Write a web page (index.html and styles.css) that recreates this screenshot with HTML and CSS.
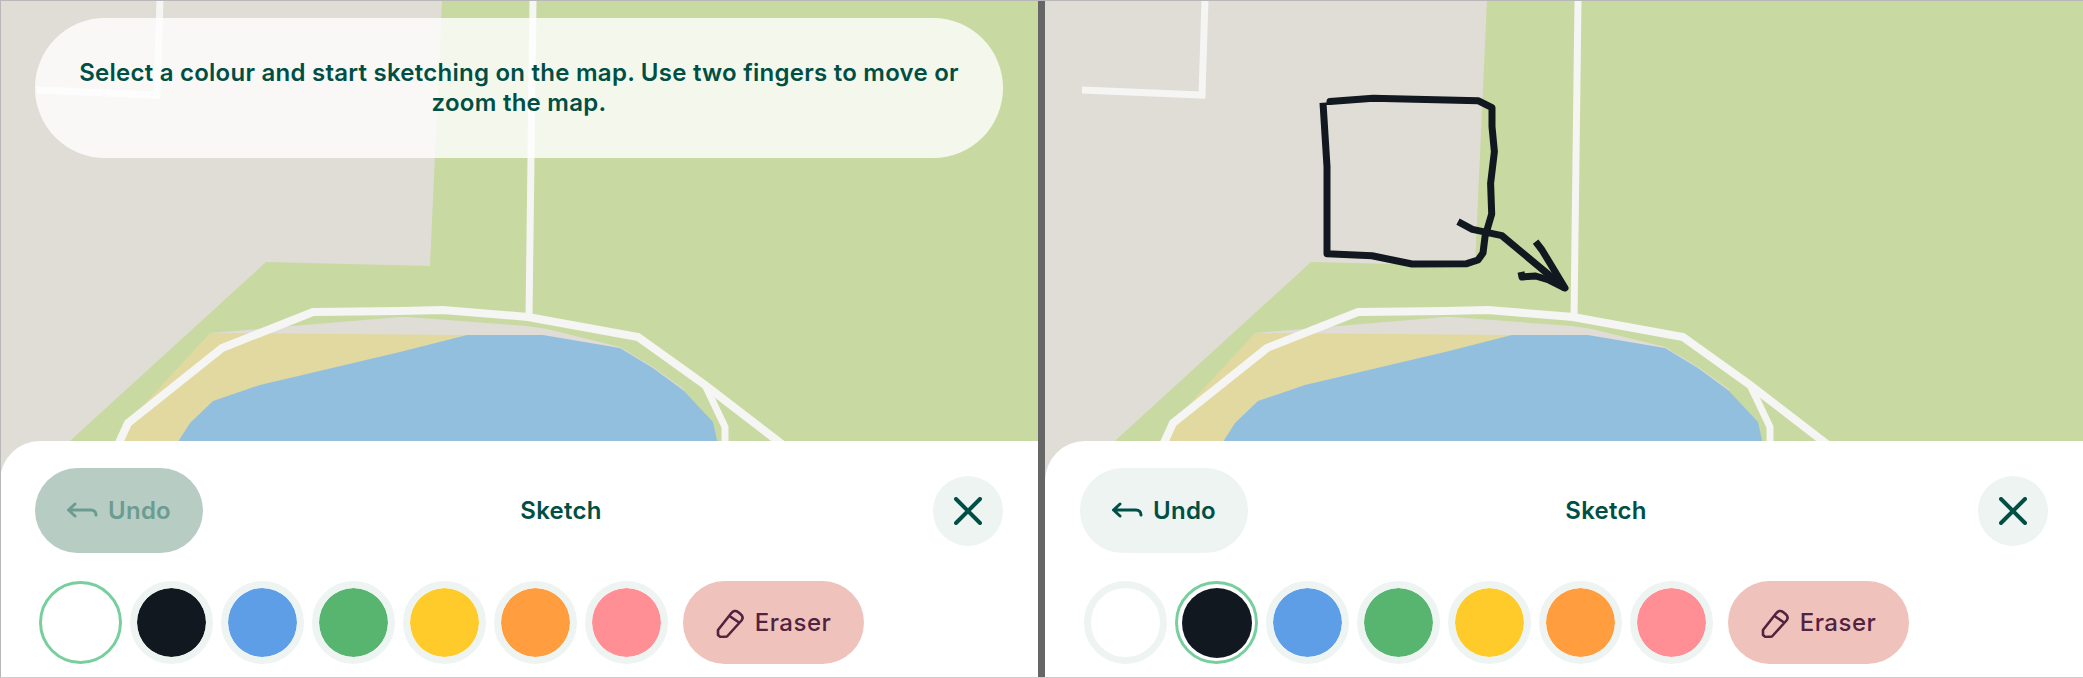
FILE: index.html
```html
<!DOCTYPE html>
<html lang="en">
<head>
    <meta charset="UTF-8">
    <meta name="viewport" content="width=device-width, initial-scale=1.0">
    <title>Sketch</title>
    <link rel="stylesheet" href="styles.css">
</head>
<body>
    <svg class="defs" width="0" height="0">
        <defs>
            <g id="map">
                <rect width="1038" height="678" fill="#e0ddd6"/>
                <polygon fill="#c8d9a1" points="442,0 1038,0 1038,678 40,678 60,450 266,262 430,266"/>
                <polygon fill="#e0ddd6" points="210,333 400,317 407,317 527,326 547,329 620,347 653,367 685,390 600,420 210,420"/>
                <polygon fill="#e1d99f" points="210,333 470,335 300,400 178,450 118,450 125,425"/>
                <polygon fill="#93bfdf" points="176,445 190,423 213,401 260,385 400,352 467,335 543,335 620,348 653,368 683,390 713,422 718,445"/>
                <g fill="none" stroke="#f5f5f4" stroke-width="7">
                    <polyline points="160,0 157,95 37,90"/>
                    <polyline points="533,0 529,317"/>
                    <polyline stroke-width="8" points="118,445 128,423 222,348 313,312 400,311 443,310 528,317 638,337 705,385 783,445"/>
                    <polyline points="705,385 725,427 725,445"/>
                </g>
            </g>
        </defs>
    </svg>

    <main class="frame">
        <section class="panel">
            <svg class="map" viewBox="0 0 1038 678"><use href="#map"/></svg>
            <div class="toast">Select a colour and start sketching on the map. Use two fingers to move or zoom the map.</div>
            <div class="sheet">
                <div class="sheet-head">
                    <button class="undo undo-disabled">
                        <svg class="undo-icon" viewBox="0 0 32 18"><path d="M8 2 1.500 8 8 14M2 8h22c3 0 5 2 5 5"/></svg>
                        Undo
                    </button>
                    <span class="title">Sketch</span>
                    <button class="close">
                        <svg viewBox="0 0 28 28"><path d="M2 2 26 26M26 2 2 26"/></svg>
                    </button>
                </div>
                <div class="colours">
                    <button class="swatch swatch-white selected"></button>
                    <button class="swatch swatch-black"></button>
                    <button class="swatch swatch-blue"></button>
                    <button class="swatch swatch-green"></button>
                    <button class="swatch swatch-yellow"></button>
                    <button class="swatch swatch-orange"></button>
                    <button class="swatch swatch-pink"></button>
                    <button class="eraser">
                        <svg class="eraser-icon" viewBox="0 0 28 30"><path d="M2 22 15 5.500c2-2.500 4.500-3.500 7-1.500l2.500 2c2.500 2 2.500 4.500 1 6.500L11 28.500 4.500 29 2 27ZM13.500 8l9.500 6.500"/></svg>
                        Eraser
                    </button>
                </div>
            </div>
        </section>

        <div class="divider"></div>

        <section class="panel">
            <svg class="map" viewBox="0 0 1038 678">
                <use href="#map"/>
                <g class="drawing">
                    <polyline points="285,105 285,101.500 328,98.300 433,100.700 447,107.700 447,126.700 449.400,151.700 445.600,183.300 446.700,214 440,236.700 438,253 433,260 421.700,263.700 367,264 327,255.700 282,253.700 282,166.700 278,102.700"/>
                    <polyline points="413,221.700 427.400,229.300 457,235.700 520,288.300"/>
                    <polyline points="490.600,241.700 497,250 520,288 504,280 490.600,276 477,277 476,272"/>
                </g>
            </svg>
            <div class="sheet sheet-only">
                <div class="sheet-head">
                    <button class="undo">
                        <svg class="undo-icon" viewBox="0 0 32 18"><path d="M8 2 1.500 8 8 14M2 8h22c3 0 5 2 5 5"/></svg>
                        Undo
                    </button>
                    <span class="title">Sketch</span>
                    <button class="close">
                        <svg viewBox="0 0 28 28"><path d="M2 2 26 26M26 2 2 26"/></svg>
                    </button>
                </div>
                <div class="colours">
                    <button class="swatch swatch-white"></button>
                    <button class="swatch swatch-black selected"></button>
                    <button class="swatch swatch-blue"></button>
                    <button class="swatch swatch-green"></button>
                    <button class="swatch swatch-yellow"></button>
                    <button class="swatch swatch-orange"></button>
                    <button class="swatch swatch-pink"></button>
                    <button class="eraser">
                        <svg class="eraser-icon" viewBox="0 0 28 30"><path d="M2 22 15 5.500c2-2.500 4.500-3.500 7-1.500l2.500 2c2.500 2 2.500 4.500 1 6.500L11 28.500 4.500 29 2 27ZM13.500 8l9.500 6.500"/></svg>
                        Eraser
                    </button>
                </div>
            </div>
        </section>
    </main>
</body>
</html>
```

FILE: styles.css
```css
* {
    box-sizing: border-box;
}
html, body {
    margin: 0;
    height: 100%;
}
body {
    font-family: Inter, "Liberation Sans", sans-serif;
    color: #004f45;
    overflow: hidden;
}
button {
    font: inherit;
    letter-spacing: inherit;
    border: none;
    padding: 0;
    cursor: pointer;
}
.defs {
    display: block;
}
.frame {
    position: relative;
    display: flex;
    height: 678px;
    font-size: 24px;
    font-weight: 600;
    letter-spacing: 0.25px;
}
.frame::after {
    content: "";
    position: absolute;
    inset: 0;
    border: 1px solid #b8b8b8;
    border-right: none;
    border-bottom-color: #ccc;
    pointer-events: none;
}
.divider {
    width: 7px;
    background-color: #666;
}
.panel {
    position: relative;
    display: flex;
    flex-direction: column;
    justify-content: space-between;
    width: 1038px;
    overflow: hidden;
}
.map {
    position: absolute;
    top: 0;
    left: 0;
    width: 1038px;
    height: 678px;
}
.drawing polyline {
    fill: none;
    stroke: #111820;
    stroke-width: 7;
    stroke-linejoin: round;
}

/* hint over the map */
.toast {
    position: relative;
    margin: 18px 35px 0;
    padding: 0 42px;
    height: 140px;
    display: flex;
    align-items: center;
    text-align: center;
    border-radius: 70px;
    background-color: rgba(255, 255, 255, 0.8);
    line-height: 30px;
}

/* bottom sheet */
.sheet {
    position: relative;
    height: 237px;
    padding: 27px 35px 0;
    background-color: #fff;
    border-radius: 40px 0 0 0;
}
.sheet-only {
    margin-top: auto;
}
.sheet-head {
    display: flex;
    align-items: center;
    height: 85px;
}
.title {
    flex: 1;
    padding-right: 14px;
    text-align: center;
}
.undo {
    display: flex;
    align-items: center;
    justify-content: center;
    gap: 9px;
    width: 168px;
    height: 85px;
    border-radius: 43px;
    background-color: #eef4f2;
    color: #004f45;
}
.undo-disabled {
    background-color: #b7cdc4;
    color: #6c9c91;
}
.undo-icon {
    width: 32px;
    height: 18px;
    fill: none;
    stroke: currentColor;
    stroke-width: 3;
    stroke-linecap: round;
    stroke-linejoin: round;
}
.close {
    display: flex;
    align-items: center;
    justify-content: center;
    width: 70px;
    height: 70px;
    border-radius: 50%;
    background-color: #eef4f2;
}
.close svg {
    width: 28px;
    height: 28px;
    fill: none;
    stroke: #004f45;
    stroke-width: 4;
    stroke-linecap: round;
}
.colours {
    display: flex;
    align-items: center;
    gap: 8px;
    margin-top: 28px;
    padding-left: 4px;
}
.swatch {
    width: 83px;
    height: 83px;
    border-radius: 50%;
    border: 7px solid #eef4f2;
    background-clip: padding-box;
}
.swatch.selected {
    border: 3.500px solid #78cf9e;
    padding: 3.500px;
    background-clip: content-box;
}
.swatch-white { background-color: #fff; }
.swatch-black { background-color: #111820; }
.swatch-blue { background-color: #5e9ee6; }
.swatch-green { background-color: #58b56f; }
.swatch-yellow { background-color: #ffcb2b; }
.swatch-orange { background-color: #ff9d3f; }
.swatch-pink { background-color: #ff8e95; }
.eraser {
    display: flex;
    align-items: center;
    justify-content: center;
    gap: 11px;
    width: 181px;
    height: 83px;
    margin-left: 7px;
    border-radius: 42px;
    background-color: #f0c2bc;
    color: #50233f;
    font-weight: 500;
    letter-spacing: 0.5px;
}
.eraser-icon {
    width: 28px;
    height: 30px;
    fill: none;
    stroke: currentColor;
    stroke-width: 2.6;
    stroke-linejoin: round;
}
```
